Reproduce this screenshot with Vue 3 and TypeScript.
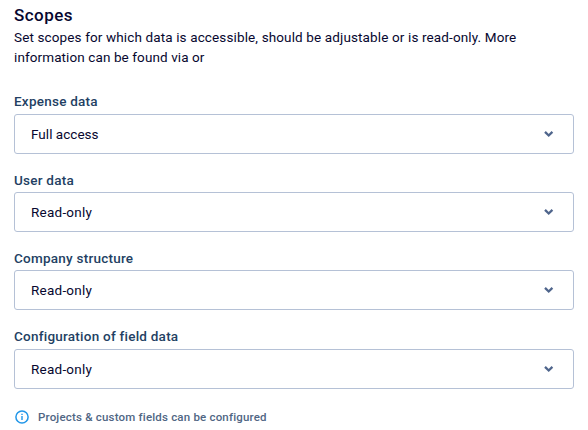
<script setup lang="ts">
interface ScopeField {
  id: string
  label: string
  value: string
}

const fields: ScopeField[] = [
  { id: 'expense', label: 'Expense data', value: 'Full access' },
  { id: 'user', label: 'User data', value: 'Read-only' },
  { id: 'company', label: 'Company structure', value: 'Read-only' },
  { id: 'configuration', label: 'Configuration of field data', value: 'Read-only' },
]
</script>

<template>
  <main class="scopes">
    <h1 class="title">Scopes</h1>
    <p class="intro">
      <span class="line first">Set scopes for which data is accessible, should be adjustable or is read-only. More</span>
      <span class="line">information can be found via or</span>
    </p>
    <div class="fields">
      <div v-for="field in fields" :key="field.id" class="field">
        <span class="label">{{ field.label }}</span>
        <button type="button" class="select">
          <span class="value" :class="{ full: field.value === 'Full access' }">{{ field.value }}</span>
          <svg class="chevron" width="10" height="8" viewBox="0 0 10 8" aria-hidden="true">
            <path d="M1 1.9 4.7 5.5 8.4 1.9" fill="none" stroke="#4f658c" stroke-width="2.3" />
          </svg>
        </button>
      </div>
    </div>
    <div class="note">
      <svg width="14" height="14" viewBox="0 0 14 14" aria-hidden="true">
        <circle cx="7" cy="7" r="6.1" fill="none" stroke="#2196e8" stroke-width="1.5" />
        <path d="M7 6v4.1M7 3.8v1.3" stroke="#2196e8" stroke-width="1.4" />
      </svg>
      <span class="note-text">Projects &amp; custom fields can be configured</span>
    </div>
  </main>
</template>

<style>
body {
  margin: 0;
  background: #fff;
}
</style>

<style scoped>
.scopes {
  box-sizing: border-box;
  height: 430px;
  padding: 4px 14px 0;
  overflow: hidden;
  font-family: Roboto, 'Liberation Sans', sans-serif;
  color: #07072f;
}
.title {
  margin: 0;
  font-size: 17px;
  line-height: 23px;
  font-weight: 500;
  letter-spacing: 0.45px;
}
.intro {
  margin: 0;
  font-size: 13.5px;
  line-height: 20px;
  letter-spacing: 0.1px;
}
.line {
  display: block;
  white-space: nowrap;
}
.first {
  letter-spacing: 0.13px;
}
.fields {
  display: flex;
  flex-direction: column;
  gap: 15.9px;
  padding-top: 24.4px;
}
.field {
  display: flex;
  flex-direction: column;
}
.label {
  height: 22.4px;
  font-size: 13.5px;
  line-height: 20px;
  font-weight: 500;
  letter-spacing: 0.24px;
  color: #233f63;
}
.select {
  box-sizing: border-box;
  display: flex;
  align-items: center;
  justify-content: space-between;
  width: 100%;
  height: 40px;
  padding: 0 19px 0 16px;
  border: 1px solid #b5c1d6;
  border-radius: 3px;
  background: #fff;
  font: inherit;
  font-size: 13.5px;
  color: #07072f;
}
.value {
  letter-spacing: 0.24px;
}
.full {
  letter-spacing: 0.03px;
}
.note {
  display: flex;
  align-items: center;
  gap: 9px;
  padding: 18px 0 0 1px;
  line-height: 20px;
}
.note-text {
  font-size: 11.5px;
  font-weight: 500;
  letter-spacing: 0.19px;
  color: #506684;
}
</style>
